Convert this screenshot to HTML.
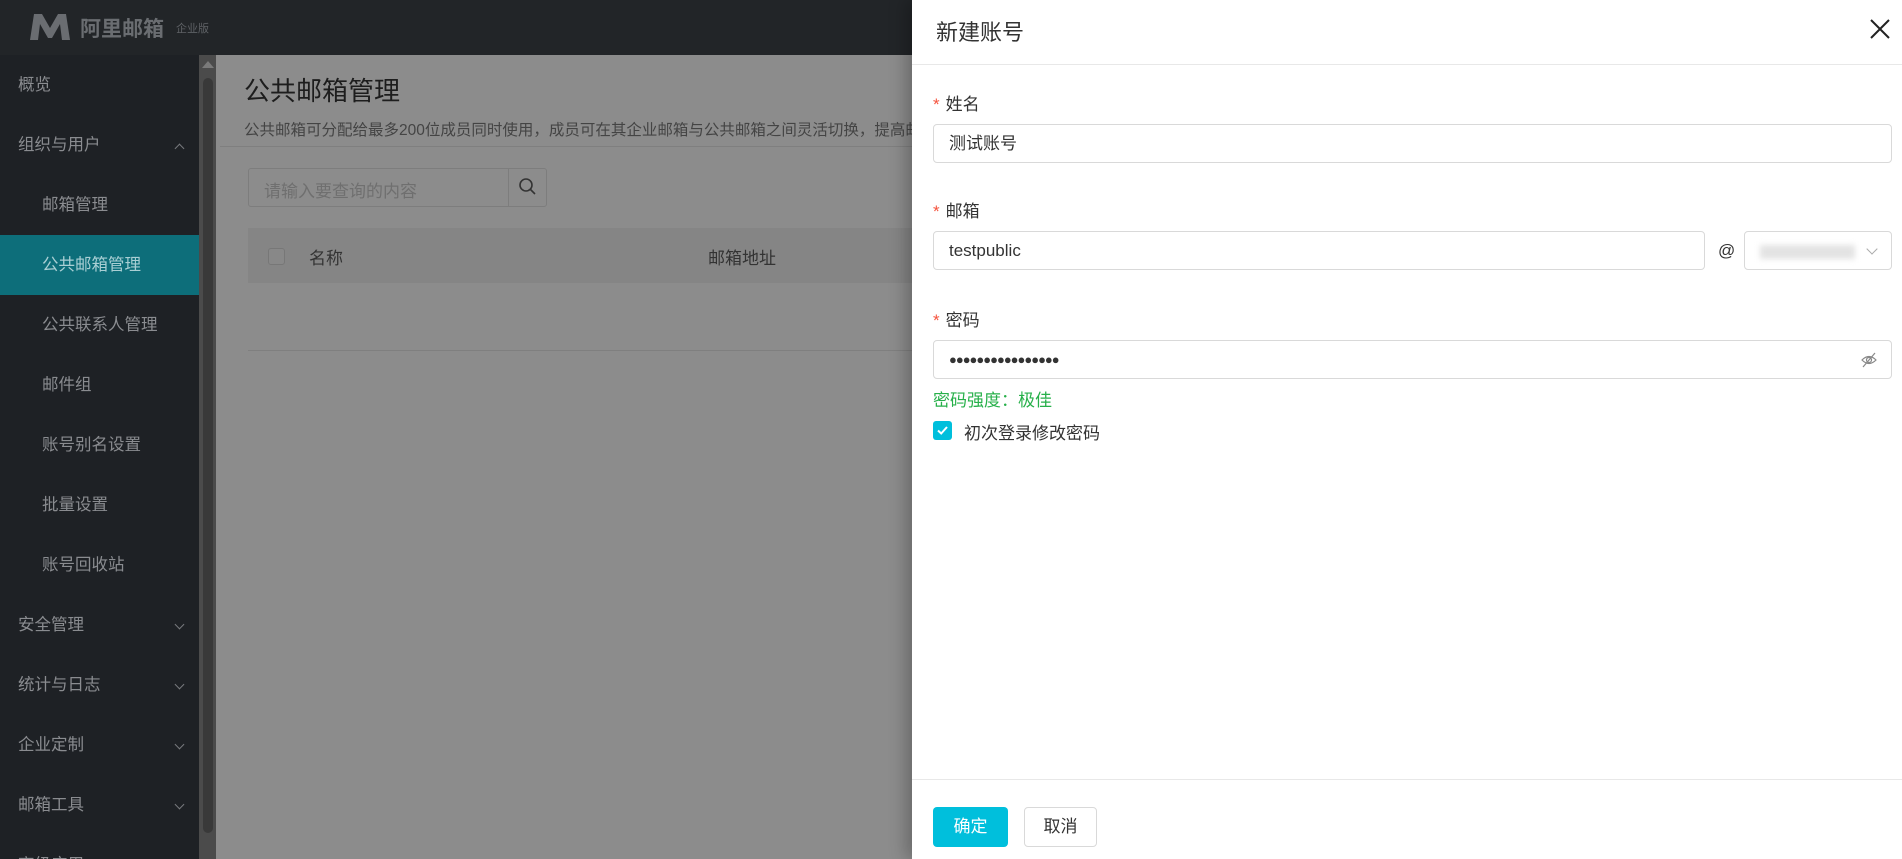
<!DOCTYPE html>
<html style="width:1902px;height:859px;overflow:hidden"><head><meta charset="utf-8"><style>
*{margin:0;padding:0;box-sizing:border-box}
body{width:1902px;height:859px;overflow:hidden;position:relative;font-family:"Liberation Sans","Noto Sans CJK SC",sans-serif;background:#8c8c8c}
.top{position:absolute;left:0;top:0;width:1902px;height:55px;background:#222528}
.side{position:absolute;left:0;top:55px;width:199px;height:804px;background:#1e2125;overflow:hidden}
.it{position:absolute;left:0;width:199px;height:60px;line-height:60px;font-size:16.5px;color:#8a8c90}
.it.sub{padding-left:42px}.it.top1{padding-left:18px}
.it.act{background:#0d6e7a;color:#a9cfd4}
.chev{position:absolute;left:176px;top:26px;width:7px;height:7px;border-right:1px solid #77797d;border-bottom:1px solid #77797d;transform:rotate(45deg)}
.chev.up{transform:rotate(225deg);top:30px}
.track{position:absolute;left:199px;top:55px;width:17px;height:804px;background:#4b4b4b}
.thumb{position:absolute;left:203px;top:78px;width:10px;height:755px;background:#393939;border-radius:5px}
.main{position:absolute;left:216px;top:55px;width:696px;height:804px;background:#8c8c8c;overflow:hidden}
.drawer{position:absolute;left:912px;top:0;width:990px;height:859px;background:#fff;box-shadow:-6px 0 16px rgba(0,0,0,.25)}
.lbl{position:absolute;left:21px;font-size:17px;color:#333}
.lbl b{color:#f5533d;font-weight:normal;margin-right:6px;font-size:17px}
.inp{position:absolute;border:1px solid #d9d9d9;border-radius:4px;height:39px;font-size:17px;color:#333;line-height:37px;padding-left:15px}
</style></head><body>
<div class="top">
 <svg style="position:absolute;left:28px;top:12px" width="44" height="28" viewBox="0 0 44 28"><path d="M2 28 L6 2 L14 2 L22 16 L30 2 L38 2 L42 28 L34 28 L32 12 L24 26 L20 26 L12 12 L10 28Z" fill="#6a6d71"/></svg>
 <div style="position:absolute;left:80px;top:13px;font-size:21px;font-weight:bold;color:#6a6d71">阿里邮箱</div>
 <div style="position:absolute;left:176px;top:20px;font-size:11px;color:#5e6165">企业版</div>
</div>
<div class="side">
 <div class="it top1" style="top:0">概览</div>
 <div class="it top1" style="top:60px">组织与用户<span class="chev up"></span></div>
 <div class="it sub" style="top:120px">邮箱管理</div>
 <div class="it sub act" style="top:180px">公共邮箱管理</div>
 <div class="it sub" style="top:240px">公共联系人管理</div>
 <div class="it sub" style="top:300px">邮件组</div>
 <div class="it sub" style="top:360px">账号别名设置</div>
 <div class="it sub" style="top:420px">批量设置</div>
 <div class="it sub" style="top:480px">账号回收站</div>
 <div class="it top1" style="top:540px">安全管理<span class="chev"></span></div>
 <div class="it top1" style="top:600px">统计与日志<span class="chev"></span></div>
 <div class="it top1" style="top:660px">企业定制<span class="chev"></span></div>
 <div class="it top1" style="top:720px">邮箱工具<span class="chev"></span></div>
 <div class="it top1" style="top:780px">高级应用</div>
</div>
<div class="track"></div>
<div style="position:absolute;left:202px;top:61px;width:0;height:0;border-left:6px solid transparent;border-right:6px solid transparent;border-bottom:7px solid #7a7a7a"></div>
<div class="thumb"></div>
<div class="main">
 <div style="position:absolute;left:28px;top:16px;font-size:26px;color:#1d1d1d">公共邮箱管理</div>
 <div style="position:absolute;left:28px;top:63px;font-size:15.5px;color:#444;white-space:nowrap">公共邮箱可分配给最多200位成员同时使用，成员可在其企业邮箱与公共邮箱之间灵活切换，提高邮件收发效率</div>
 <div style="position:absolute;left:4px;top:91px;width:692px;height:1px;background:#7f7f7f"></div>
 <div style="position:absolute;left:32px;top:113px;width:299px;height:39px;border:1px solid #7d7d7d;border-radius:3px"></div>
 <div style="position:absolute;left:292px;top:113px;width:1px;height:39px;background:#7d7d7d"></div>
 <div style="position:absolute;left:48px;top:122px;font-size:17px;color:#6f6f6f">请输入要查询的内容</div>
 <svg style="position:absolute;left:302px;top:122px" width="20" height="20" viewBox="0 0 20 20"><circle cx="8" cy="8" r="6" fill="none" stroke="#333" stroke-width="1.6"/><path d="M12.5 12.5L17 17" stroke="#333" stroke-width="1.6"/></svg>
 <div style="position:absolute;left:32px;top:173px;width:664px;height:55px;background:#858585"></div>
 <div style="position:absolute;left:52px;top:193px;width:17px;height:17px;border:1px solid #777;border-radius:3px;background:#888"></div>
 <div style="position:absolute;left:93px;top:189px;font-size:17px;color:#333">名称</div>
 <div style="position:absolute;left:492px;top:189px;font-size:17px;color:#333">邮箱地址</div>
 <div style="position:absolute;left:32px;top:295px;width:664px;height:1px;background:#7f7f7f"></div>
</div>
<div class="drawer">
 <div style="position:absolute;left:24px;top:15px;font-size:22px;color:#333">新建账号</div>
 <svg style="position:absolute;left:958px;top:19px" width="20" height="20" viewBox="0 0 20 20"><path d="M1 1L19 19M19 1L1 19" stroke="#222" stroke-width="2"/></svg>
 <div style="position:absolute;left:0;top:64px;width:990px;height:1px;background:#e8e8e8"></div>
 <div class="lbl" style="top:90px"><b>*</b>姓名</div>
 <div class="inp" style="left:21px;top:124px;width:959px">测试账号</div>
 <div class="lbl" style="top:197px"><b>*</b>邮箱</div>
 <div class="inp" style="left:21px;top:231px;width:772px">testpublic</div>
 <div style="position:absolute;left:806px;top:241px;font-size:17px;color:#333">@</div>
 <div class="inp" style="left:832px;top:231px;width:148px"><span style="display:inline-block;width:95px;height:14px;background:#e3e3e3;filter:blur(3px);vertical-align:middle"></span></div>
 <div style="position:absolute;left:956px;top:245px;width:8px;height:8px;border-right:1px solid #aaa;border-bottom:1px solid #aaa;transform:rotate(45deg)"></div>
 <div class="lbl" style="top:306px"><b>*</b>密码</div>
 <div class="inp" style="left:21px;top:340px;width:959px;font-size:13px;letter-spacing:-1px">●●●●●●●●●●●●●●●●</div>
 <svg style="position:absolute;left:948px;top:351px" width="18" height="18" viewBox="0 0 18 18"><path d="M2 9Q9 2 16 9Q9 16 2 9Z" fill="none" stroke="#888" stroke-width="1.2"/><circle cx="9" cy="9" r="2.5" fill="none" stroke="#888" stroke-width="1.2"/><path d="M3 16L15 2" stroke="#888" stroke-width="1.2"/></svg>
 <div style="position:absolute;left:21px;top:386px;font-size:17px;color:#27b04a">密码强度：极佳</div>
 <div style="position:absolute;left:21px;top:421px;width:19px;height:19px;border-radius:3px;background:#00bfdc"><svg width="19" height="19" viewBox="0 0 19 19"><path d="M5 9.5L8.2 12.5L14 6" fill="none" stroke="#fff" stroke-width="2"/></svg></div>
 <div style="position:absolute;left:52px;top:419px;font-size:17px;color:#333">初次登录修改密码</div>
 <div style="position:absolute;left:0;top:779px;width:990px;height:1px;background:#e8e8e8"></div>
 <div style="position:absolute;left:21px;top:807px;width:75px;height:40px;background:#00bfdc;border-radius:4px;color:#fff;font-size:17px;text-align:center;line-height:40px">确定</div>
 <div style="position:absolute;left:112px;top:807px;width:73px;height:40px;border:1px solid #d9d9d9;border-radius:4px;color:#333;font-size:17px;text-align:center;line-height:38px">取消</div>
</div>
</body></html>
